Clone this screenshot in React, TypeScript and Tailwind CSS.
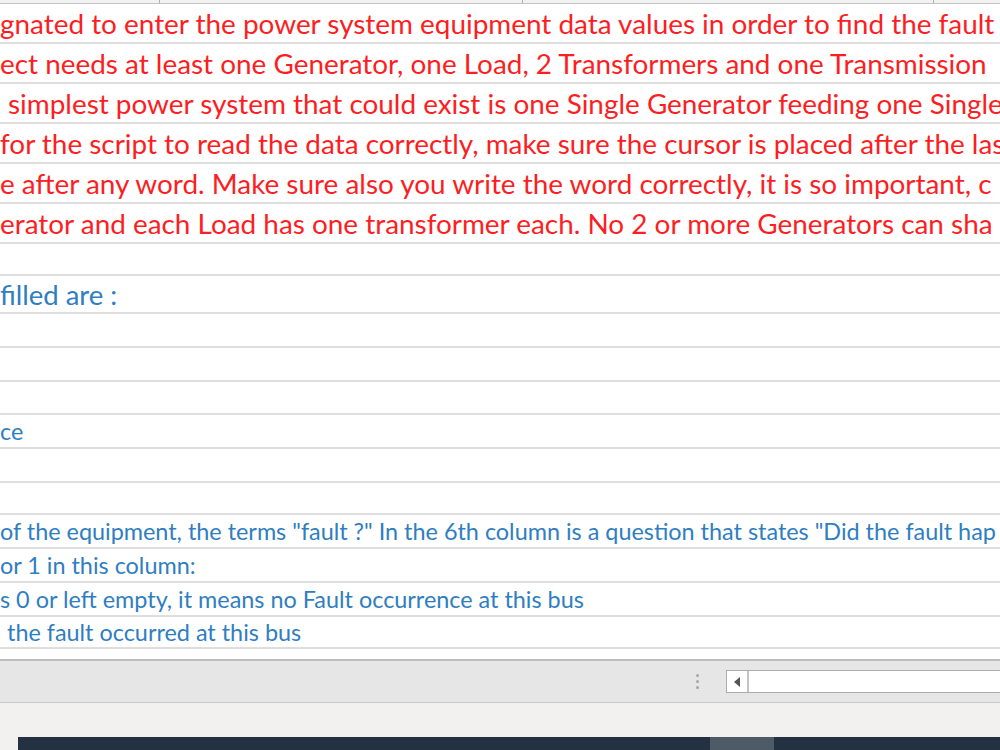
import React from 'react';

const FONT = { fontFamily: 'Lato, "Open Sans", sans-serif' };

type Row = { h: string; text?: string; kind?: 'red' | 'blueLg' | 'blueSm'; indent?: string };

// Row heights include their bottom gridline; texts run past the window edge as in the sheet
const rows: Row[] = [
  { h: 'h-[40px]', kind: 'red', text: 'gnated to enter the power system equipment data values in order to find the fault c' },
  { h: 'h-[40px]', kind: 'red', text: 'ect needs at least one Generator, one Load, 2 Transformers and one Transmission' },
  { h: 'h-[40px]', kind: 'red', text: 'simplest power system that could exist is one Single Generator feeding one Single', indent: 'ml-[8px]' },
  { h: 'h-[40px]', kind: 'red', text: 'for the script to read the data correctly, make sure the cursor is placed after the las' },
  { h: 'h-[40px]', kind: 'red', text: 'e after any word. Make sure also you write the word correctly, it is so important, c' },
  { h: 'h-[40px]', kind: 'red', text: 'erator and each Load has one transformer each. No 2 or more Generators can sha' },
  { h: 'h-[32px]' },
  { h: 'h-[38px]', kind: 'blueLg', text: 'filled are :' },
  { h: 'h-[34px]' },
  { h: 'h-[34px]' },
  { h: 'h-[33px]' },
  { h: 'h-[34px]', kind: 'blueSm', text: 'ce' },
  { h: 'h-[34px]' },
  { h: 'h-[32px]' },
  { h: 'h-[34px]', kind: 'blueSm', text: 'of the equipment, the terms "fault ?" In the 6th column is a question that states "Did the fault hap' },
  { h: 'h-[34px]', kind: 'blueSm', text: 'or 1 in this column:' },
  { h: 'h-[34px]', kind: 'blueSm', text: 's 0 or left empty, it means no Fault occurrence at this bus' },
  { h: 'h-[32px]', kind: 'blueSm', text: 'the fault occurred at this bus', indent: 'ml-[7px]' },
];

function textClass(kind?: Row['kind']) {
  if (kind === 'red') return 'text-[27.9px] text-[#fc1e22]';
  if (kind === 'blueLg') return 'text-[27.5px] text-[#2f7ec2]';
  return 'text-[23.4px] text-[#2f7ec2]';
}

function SheetRow({ row }: { row: Row }) {
  return (
    <div className={`${row.h} flex items-center border-b-2 border-[#dedede] overflow-hidden whitespace-nowrap`}>
      {row.text && (
        <span className={`${textClass(row.kind)} ${row.indent ?? ''} leading-none pt-[1px]`}>{row.text}</span>
      )}
    </div>
  );
}

export default function App() {
  return (
    <div className="w-[1000px] h-[750px] overflow-hidden bg-white flex flex-col" style={FONT}>
      {/* column header strip */}
      <div className="h-[4px] shrink-0 bg-[#f2f2f2] border-b border-[#c4c4c4] flex">
        <div className="w-[160px] border-r border-[#b0b0b0]" />
        <div className="w-[363px] border-r border-[#b0b0b0]" />
        <div className="w-[411px] border-r border-[#b0b0b0]" />
        <div className="flex-1" />
      </div>

      {/* sheet body */}
      <div className="flex flex-col">
        {rows.map((r, i) => (
          <SheetRow key={i} row={r} />
        ))}
        <div className="h-[10px]" />
      </div>

      {/* sheet tab / scroll bar strip */}
      <div className="h-[44px] shrink-0 bg-[#e6e6e6] border-t-2 border-b border-t-[#bdbdbd] border-b-[#c9c9c9] flex items-center">
        <div className="w-[693px]" />
        <div className="flex flex-col gap-[3px] w-[33px] pl-[3px]">
          <span className="w-[3px] h-[3px] rounded-full bg-[#a6a6a6]" />
          <span className="w-[3px] h-[3px] rounded-full bg-[#a6a6a6]" />
          <span className="w-[3px] h-[3px] rounded-full bg-[#a6a6a6]" />
        </div>
        <div className="flex-1 h-[23px] flex border border-[#adadad] border-r-0 bg-white">
          <div className="w-[22px] flex items-center justify-center border-r-2 border-[#c4c4c4]">
            <svg width="8" height="10" viewBox="0 0 8 10">
              <path d="M7 0 L1 5 L7 10 Z" fill="#555" />
            </svg>
          </div>
          <div className="flex-1" />
        </div>
      </div>

      {/* status bar */}
      <div className="h-[34px] shrink-0 bg-[#f2f1f0]" />

      {/* taskbar edge */}
      <div className="flex-1 bg-[#f2f1f0] flex">
        <div className="w-[18px]" />
        <div className="flex-1 bg-[#243140] flex">
          <div className="w-[692px]" />
          <div className="w-[64px] bg-[#4e5b67]" />
        </div>
      </div>
    </div>
  );
}
